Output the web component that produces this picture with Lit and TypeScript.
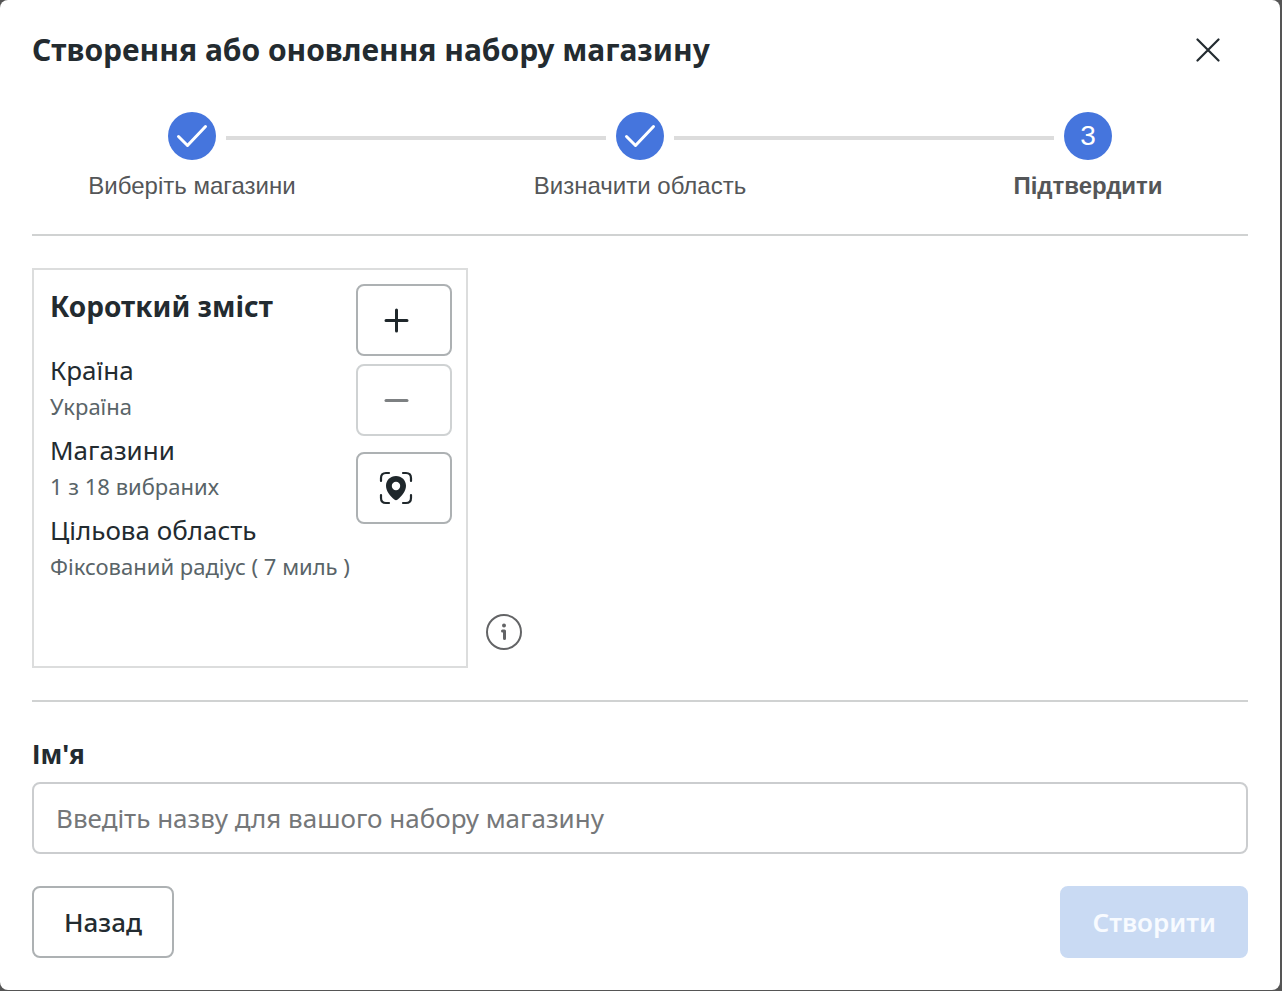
import { LitElement, html, css, svg } from "lit";
import { customElement, state } from "lit/decorators.js";

const check = svg`<path d="M10.5 24.5 19.5 33.5 37.5 14.5" />`;

@customElement("app-root")
export class AppRoot extends LitElement {
  @state() private name = "";

  private steps = ["Виберіть магазини", "Визначити область", "Підтвердити"];

  private summary = [
    { term: "Країна", value: "Україна" },
    { term: "Магазини", value: "1 з 18 вибраних" },
    { term: "Цільова область", value: "Фіксований радіус ( 7 миль )" },
  ];

  static styles = css`
    :host {
      display: block;
      box-sizing: border-box;
      min-height: 100vh;
      padding: 0 2px 1px 0;
      background: #555;
      font-family: "Noto Sans", "Open Sans", sans-serif;
    }
    * {
      box-sizing: border-box;
    }
    .dialog {
      display: flex;
      flex-direction: column;
      min-height: calc(100vh - 1px);
      padding: 24px 32px 32px;
      border-radius: 8px;
      background: #fff;
      color: #232b30;
    }
    .header {
      display: flex;
      align-items: center;
      justify-content: space-between;
      height: 52px;
    }
    .title {
      margin: 0;
      font-size: 30px;
      line-height: 40px;
      font-weight: 700;
    }
    .close {
      display: flex;
      align-items: center;
      justify-content: center;
      width: 48px;
      height: 48px;
      margin-right: 16px;
      padding: 0;
      border: 0;
      background: none;
      color: #232b30;
    }
    svg {
      display: block;
      fill: none;
      stroke: currentColor;
      stroke-linecap: round;
      stroke-linejoin: round;
    }
    .steps {
      display: flex;
      margin: 36px 0 0;
      padding: 0 136px;
      list-style: none;
      font-family: "Liberation Sans", Arial, sans-serif;
      font-size: 24px;
      line-height: 32px;
      color: #545658;
    }
    .step {
      display: flex;
      flex-direction: column;
      align-items: center;
      gap: 10px;
      width: 48px;
      flex: none;
      white-space: nowrap;
    }
    .current {
      font-weight: 700;
    }
    .bullet {
      display: flex;
      align-items: center;
      justify-content: center;
      width: 48px;
      height: 48px;
      border-radius: 50%;
      background: #4575dd;
      color: #fff;
      font-size: 28px;
      font-weight: 400;
    }
    .track {
      flex: 1;
      height: 4px;
      margin: 24px 10px 0;
      background: #dcdcdc;
    }
    .rule {
      width: 100%;
      height: 2px;
      margin: 32px 0;
      border: 0;
      background: #d0d2d2;
    }
    .overview {
      display: flex;
      align-items: flex-end;
      gap: 18px;
    }
    .card {
      display: flex;
      justify-content: space-between;
      width: 436px;
      min-height: 400px;
      padding: 14px 14px 14px 16px;
      border: 2px solid #dcdddd;
    }
    .subtitle {
      margin: 4px 0 26px;
      font-size: 28px;
      line-height: 36px;
      font-weight: 700;
    }
    .facts {
      width: 0;
      white-space: nowrap;
    }
    .list {
      margin: 0;
    }
    .term {
      font-size: 26px;
      line-height: 40px;
    }
    .value {
      margin: 0 0 8px;
      font-size: 22px;
      line-height: 32px;
      color: #596468;
    }
    .tools {
      display: flex;
      flex-direction: column;
      gap: 8px;
    }
    .tool {
      display: flex;
      align-items: center;
      width: 96px;
      height: 72px;
      padding: 0 20px;
      border: 2px solid #adb1b3;
      border-radius: 8px;
      background: #fff;
      color: #1f272b;
    }
    .tool:disabled {
      border-color: #cfd2d3;
      color: #7d8082;
    }
    .locate {
      margin-top: 8px;
    }
    .info {
      margin-bottom: 18px;
      padding: 0;
      border: 0;
      background: none;
      color: #636466;
    }
    .label {
      font-size: 26px;
      line-height: 40px;
      font-weight: 700;
    }
    .field {
      width: 100%;
      height: 72px;
      margin-top: 8px;
      padding: 0 22px;
      border: 2px solid #cbcdcf;
      border-radius: 8px;
      background: #fff;
      color: #232b30;
      font: 26px "Noto Sans", "Open Sans", sans-serif;
    }
    .field::placeholder {
      color: #757779;
      opacity: 1;
    }
    .actions {
      display: flex;
      justify-content: space-between;
      margin-top: 32px;
    }
    .action {
      height: 72px;
      padding: 0 30px;
      border: 2px solid #adb1b3;
      border-radius: 8px;
      background: #fff;
      color: #232b30;
      font: 500 26px "Noto Sans", "Open Sans", sans-serif;
    }
    .primary {
      border-color: #c9daf3;
      background: #c9daf3;
      color: #f8fbff;
      font-weight: 600;
    }
  `;

  render() {
    return html`
      <main class="dialog" role="dialog" aria-labelledby="title">
        <header class="header">
          <h1 class="title" id="title">Створення або оновлення набору магазину</h1>
          <button class="close" type="button" aria-label="Закрити">
            <svg width="24" height="24" viewBox="0 0 24 24" stroke-width="2.2">
              <path d="M1.5 1.5 22.5 22.5M22.5 1.5 1.5 22.5" />
            </svg>
          </button>
        </header>

        <ol class="steps">
          ${this.steps.map((label, i) => {
            const last = i === this.steps.length - 1;
            return html`
              <li class="step ${last ? "current" : ""}">
                <span class="bullet">
                  ${last
                    ? i + 1
                    : html`<svg width="48" height="48" viewBox="0 0 48 48" stroke-width="3">${check}</svg>`}
                </span>
                <span>${label}</span>
              </li>
              ${last ? "" : html`<li class="track" role="presentation"></li>`}
            `;
          })}
        </ol>

        <hr class="rule" />

        <section class="overview">
          <div class="card">
            <div class="facts">
              <h2 class="subtitle">Короткий зміст</h2>
              <dl class="list">
                ${this.summary.map(
                  (s) => html`<dt class="term">${s.term}</dt>
                    <dd class="value">${s.value}</dd>`
                )}
              </dl>
            </div>
            <div class="tools">
              <button class="tool" type="button" aria-label="Збільшити">
                <svg width="36" height="36" viewBox="0 0 36 36" stroke-width="3">
                  <path d="M8 18.5H29M18.5 8V29" />
                </svg>
              </button>
              <button class="tool" type="button" aria-label="Зменшити" disabled>
                <svg width="36" height="36" viewBox="0 0 36 36" stroke-width="3">
                  <path d="M8 18.5H29" />
                </svg>
              </button>
              <button class="tool locate" type="button" aria-label="Центрувати">
                <svg width="36" height="36" viewBox="0 0 36 36" stroke-width="2.2">
                  <path d="M3 11V8Q3 3 8 3H11M25 3H28Q33 3 33 8V11M33 25V28Q33 33 28 33H25M11 33H8Q3 33 3 28V25" />
                  <path
                    d="M18 6C12.300 6 8 10.300 8 15.800 8 21.500 12.500 26.200 16.300 29.500Q18 31 19.700 29.500C23.500 26.200 28 21.500 28 15.800 28 10.300 23.700 6 18 6ZM18 11.800A4.200 4.200 0 1 1 18 20.200 4.200 4.200 0 0 1 18 11.800Z"
                    fill="currentColor"
                    fill-rule="evenodd"
                    stroke="none"
                  />
                </svg>
              </button>
            </div>
          </div>
          <button class="info" type="button" aria-label="Інформація">
            <svg width="36" height="36" viewBox="0 0 36 36" stroke-width="2">
              <circle cx="18" cy="18" r="17" />
              <circle cx="18" cy="11.500" r="2" fill="currentColor" stroke="none" />
              <path d="M16.500 17H18.500V24.500" stroke-width="3" />
            </svg>
          </button>
        </section>

        <hr class="rule" />

        <label class="label" for="name">Ім'я</label>
        <input
          class="field"
          id="name"
          type="text"
          placeholder="Введіть назву для вашого набору магазину"
          .value=${this.name}
          @input=${(e: Event) => (this.name = (e.target as HTMLInputElement).value)}
        />

        <footer class="actions">
          <button class="action" type="button">Назад</button>
          <button class="action primary" type="button" disabled>Створити</button>
        </footer>
      </main>
    `;
  }
}
